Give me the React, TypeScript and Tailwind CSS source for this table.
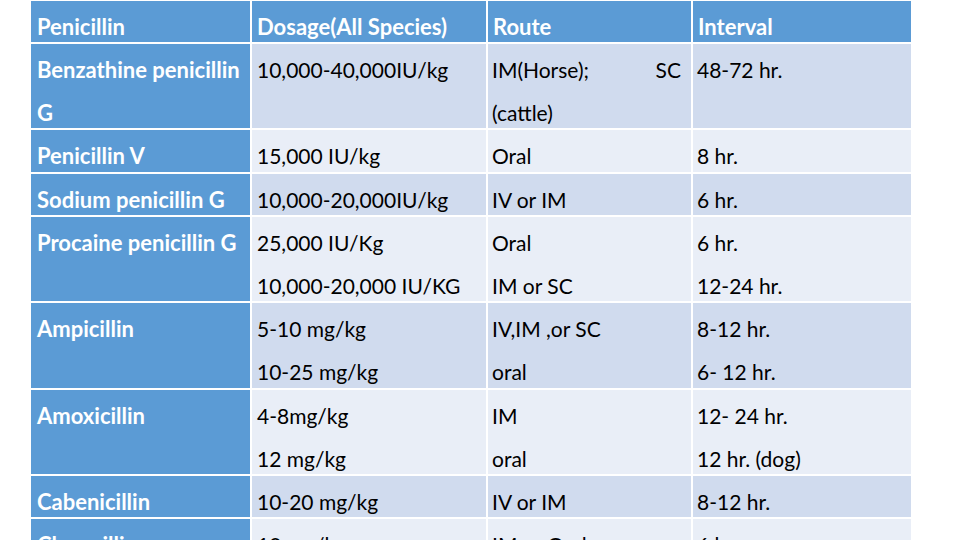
import React from "react";

type Row = {
  name: string[];
  dose: string[];
  route: React.ReactNode[];
  interval: string[];
  dark: boolean;
};

const rows: Row[] = [
  {
    name: ["Benzathine penicillin", "G"],
    dose: ["10,000-40,000IU/kg"],
    route: [
      <span key="a" className="flex justify-between pr-[10px]">
        <span>IM(Horse);</span>
        <span>SC</span>
      </span>,
      "(cattle)",
    ],
    interval: ["48-72 hr."],
    dark: true,
  },
  { name: ["Penicillin V"], dose: ["15,000 IU/kg"], route: ["Oral"], interval: ["8 hr."], dark: false },
  { name: ["Sodium penicillin G"], dose: ["10,000-20,000IU/kg"], route: ["IV or IM"], interval: ["6 hr."], dark: true },
  {
    name: ["Procaine penicillin G"],
    dose: ["25,000 IU/Kg", "10,000-20,000 IU/KG"],
    route: ["Oral", "IM or SC"],
    interval: ["6 hr.", "12-24 hr."],
    dark: false,
  },
  {
    name: ["Ampicillin"],
    dose: ["5-10 mg/kg", "10-25 mg/kg"],
    route: ["IV,IM ,or SC", "oral"],
    interval: ["8-12 hr.", "6- 12 hr."],
    dark: true,
  },
  {
    name: ["Amoxicillin"],
    dose: ["4-8mg/kg", "12 mg/kg"],
    route: ["IM", "oral"],
    interval: ["12- 24 hr.", "12 hr. (dog)"],
    dark: false,
  },
  { name: ["Cabenicillin"], dose: ["10-20 mg/kg"], route: ["IV or IM"], interval: ["8-12 hr."], dark: true },
  { name: ["Cloxacillin"], dose: ["10 mg/kg"], route: ["IM or Oral"], interval: ["6 hr."], dark: false },
];

function Lines({ items }: { items: React.ReactNode[] }) {
  return (
    <>
      {items.map((t, i) => (
        <div key={i} className="h-[43px] whitespace-nowrap">
          {t}
        </div>
      ))}
    </>
  );
}

export default function App() {
  return (
    <div
      className="w-[960px] h-[540px] overflow-hidden bg-white pt-px pl-[31px] text-[21px] leading-[43px]"
      style={{ fontFamily: "Lato, 'Open Sans', sans-serif" }}
    >
      <div className="grid w-fit grid-cols-[219px_234px_203px_218px] grid-rows-[41px_84px_42px_41px_84px_85px_84px_41px_42px] gap-[2px] bg-white">
        {["Penicillin", "Dosage(All Species)", "Route", "Interval"].map((h, i) => (
          <div key={h} className={`bg-[#5b9bd5] text-[22px] font-bold text-white pt-[4px] ${i === 0 ? "pl-[6px]" : "pl-[5px]"}`}>
            {h}
          </div>
        ))}
        {rows.map((r, idx) => {
          const bg = r.dark ? "bg-[#d0dbee]" : "bg-[#e9eef7]";
          return (
            <React.Fragment key={idx}>
              <div className="bg-[#5b9bd5] pl-[6px] pt-[4px] text-[22px] font-bold text-white">
                <Lines items={r.name} />
              </div>
              <div className={`${bg} pl-[5px] pt-[4px] text-black`}>
                <Lines items={r.dose} />
              </div>
              <div className={`${bg} pl-[4px] pt-[4px] text-black`}>
                <Lines items={r.route} />
              </div>
              <div className={`${bg} pl-[4px] pt-[4px] text-black`}>
                <Lines items={r.interval} />
              </div>
            </React.Fragment>
          );
        })}
      </div>
    </div>
  );
}
